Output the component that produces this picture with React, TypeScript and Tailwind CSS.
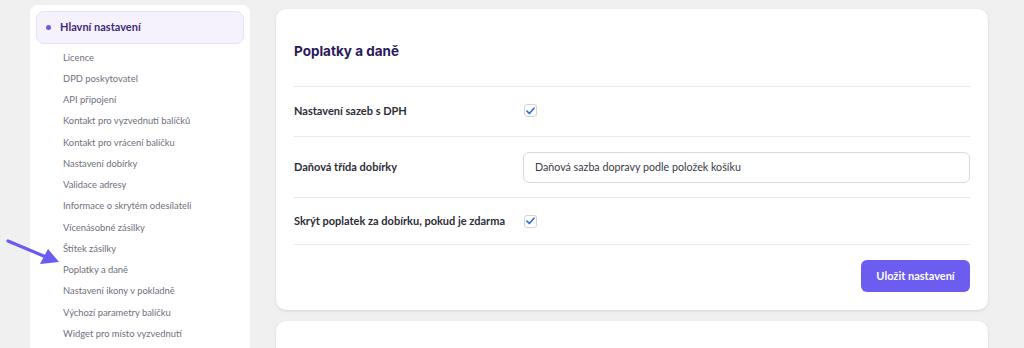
import React from 'react'

const subItems = [
  'Licence',
  'DPD poskytovatel',
  'API připojení',
  'Kontakt pro vyzvednutí balíčků',
  'Kontakt pro vrácení balíčku',
  'Nastavení dobírky',
  'Validace adresy',
  'Informace o skrytém odesílateli',
  'Vícenásobné zásilky',
  'Štítek zásilky',
  'Poplatky a daně',
  'Nastavení ikony v pokladně',
  'Výchozí parametry balíčku',
  'Widget pro místo vyzvednutí',
]

function Checkbox() {
  return (
    <div className="w-[13px] h-[13px] rounded-[3px] border border-[#d4d4d8] bg-white flex items-center justify-center">
      <svg width="9" height="8" viewBox="0 0 9 8" fill="none">
        <path d="M1 4.2 L3.4 6.5 L8 1.2" stroke="#2f6fd6" strokeWidth="1.7" strokeLinecap="round" strokeLinejoin="round" />
      </svg>
    </div>
  )
}

export default function App() {
  return (
    <div
      className="relative w-[1024px] h-[348px] overflow-hidden bg-[#f0f0f1] flex items-start"
      style={{ fontFamily: 'Lato, "Liberation Sans", sans-serif' }}
    >
      {/* sidebar */}
      <div className="ml-[30px] mt-[5px] w-[220px] h-[400px] bg-white rounded-t-lg p-[6px]">
        <div className="h-[33px] rounded-lg border border-[#e7e1fb] bg-[#f5f2fe] flex items-center pl-[9px]">
          <span className="w-[5px] h-[5px] rounded-full bg-[#6b5ae6]" />
          <span className="ml-[9px] text-[11px] font-bold text-[#3f2b78]">Hlavní nastavení</span>
        </div>
        <ul className="pl-[27px] pt-[3px]">
          {subItems.map((item) => (
            <li key={item} className="h-[21.25px] flex items-center text-[9.4px] text-[#70707e] whitespace-nowrap">
              {item}
            </li>
          ))}
        </ul>
      </div>

      {/* annotation arrow */}
      <svg className="absolute left-0 top-[234px]" width="64" height="34" viewBox="0 0 64 34">
        <line x1="8" y1="7" x2="46" y2="23" stroke="#6a5cf0" strokeWidth="3.2" strokeLinecap="round" />
        <polygon points="59,28 40,30 48,15" fill="#6a5cf0" />
      </svg>

      {/* main */}
      <div className="ml-[26px] w-[712px] flex flex-col gap-[11px]">
        <div className="mt-[9px] bg-white rounded-[10px] shadow-[0_1px_3px_rgba(0,0,0,0.12)] px-[18px] pb-[18px]">
          <div className="h-[78px] flex items-center border-b border-[#e8e8ee] pt-[8px]">
            <h2 className="text-[13.5px] font-bold text-[#2b1a5a]" style={{ fontFamily: 'Inter, "Liberation Sans", sans-serif' }}>
              Poplatky a daně
            </h2>
          </div>
          <div className="h-[50px] flex items-center border-b border-[#e8e8ee]">
            <div className="w-[229px] text-[11px] font-bold text-[#2d2d38] whitespace-nowrap">Nastavení sazeb s DPH</div>
            <div className="pl-[1px] -mt-[2px]"><Checkbox /></div>
          </div>
          <div className="h-[61px] flex items-center border-b border-[#e8e8ee]">
            <div className="w-[229px] text-[11px] font-bold text-[#2d2d38] whitespace-nowrap">Daňová třída dobírky</div>
            <div className="flex-1 h-[31px] rounded-md border border-[#d9d9e0] flex items-center px-[11px] text-[10.7px] text-[#3a3a45]">
              Daňová sazba dopravy podle položek košíku
            </div>
          </div>
          <div className="h-[47px] flex items-center border-b border-[#e8e8ee]">
            <div className="w-[229px] text-[11px] font-bold text-[#2d2d38] whitespace-nowrap">Skrýt poplatek za dobírku, pokud je zdarma</div>
            <div className="pl-[1px]"><Checkbox /></div>
          </div>
          <div className="flex justify-end pt-[15px]">
            <button className="w-[109px] h-[32px] rounded-md bg-[#6c5cf0] text-white text-[11px] font-bold">
              Uložit nastavení
            </button>
          </div>
        </div>
        <div className="h-[60px] bg-white rounded-[10px] shadow-[0_1px_3px_rgba(0,0,0,0.12)]" />
      </div>
    </div>
  )
}
